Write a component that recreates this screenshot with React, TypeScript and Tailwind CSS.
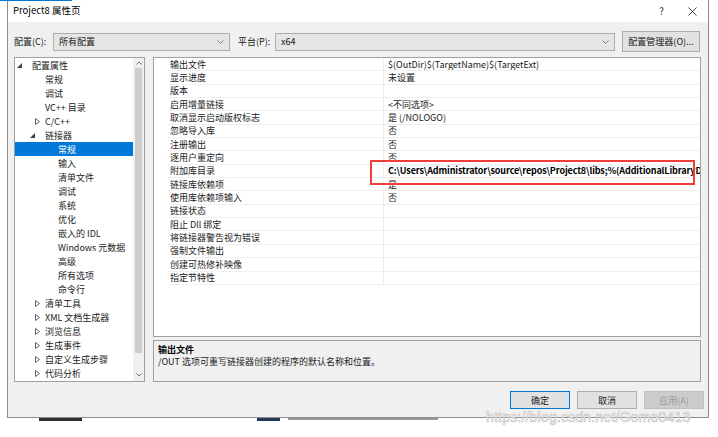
import React from 'react';

type TreeItem = { label: string; level: number; arrow?: 'open' | 'closed'; selected?: boolean };

const tree: TreeItem[] = [
  { label: '配置属性', level: 0, arrow: 'open' },
  { label: '常规', level: 1 },
  { label: '调试', level: 1 },
  { label: 'VC++ 目录', level: 1 },
  { label: 'C/C++', level: 1, arrow: 'closed' },
  { label: '链接器', level: 1, arrow: 'open' },
  { label: '常规', level: 2, selected: true },
  { label: '输入', level: 2 },
  { label: '清单文件', level: 2 },
  { label: '调试', level: 2 },
  { label: '系统', level: 2 },
  { label: '优化', level: 2 },
  { label: '嵌入的 IDL', level: 2 },
  { label: 'Windows 元数据', level: 2 },
  { label: '高级', level: 2 },
  { label: '所有选项', level: 2 },
  { label: '命令行', level: 2 },
  { label: '清单工具', level: 1, arrow: 'closed' },
  { label: 'XML 文档生成器', level: 1, arrow: 'closed' },
  { label: '浏览信息', level: 1, arrow: 'closed' },
  { label: '生成事件', level: 1, arrow: 'closed' },
  { label: '自定义生成步骤', level: 1, arrow: 'closed' },
  { label: '代码分析', level: 1, arrow: 'closed' },
];

const props: { name: string; value: string; bold?: boolean }[] = [
  { name: '输出文件', value: '$(OutDir)$(TargetName)$(TargetExt)' },
  { name: '显示进度', value: '未设置' },
  { name: '版本', value: '' },
  { name: '启用增量链接', value: '<不同选项>' },
  { name: '取消显示启动版权标志', value: '是 (/NOLOGO)' },
  { name: '忽略导入库', value: '否' },
  { name: '注册输出', value: '否' },
  { name: '逐用户重定向', value: '否' },
  { name: '附加库目录', value: 'C:\\Users\\Administrator\\source\\repos\\Project8\\libs;%(AdditionalLibraryD', bold: true },
  { name: '链接库依赖项', value: '是' },
  { name: '使用库依赖项输入', value: '否' },
  { name: '链接状态', value: '' },
  { name: '阻止 Dll 绑定', value: '' },
  { name: '将链接器警告视为错误', value: '' },
  { name: '强制文件输出', value: '' },
  { name: '创建可热修补映像', value: '' },
  { name: '指定节特性', value: '' },
];

const Chevron = () => (
  <svg width="7" height="4" viewBox="0 0 7 4" className="shrink-0">
    <polyline points="0.5,0.5 3.5,3.5 6.5,0.5" fill="none" stroke="#707070" strokeWidth="0.9" />
  </svg>
);

const Arrow = ({ kind }: { kind: 'open' | 'closed' }) =>
  kind === 'open' ? (
    <svg width="5" height="5" viewBox="0 0 5 5" className="ml-[2px]">
      <polygon points="5,0 5,5 0,5" fill="#404040" />
    </svg>
  ) : (
    <svg width="5" height="7" viewBox="0 0 5 7" className="ml-[7px]">
      <polygon points="0.5,0.5 4.5,3.5 0.5,6.5" fill="none" stroke="#505050" strokeWidth="0.9" />
    </svg>
  );

export default function App() {
  return (
    <div className="relative w-[718px] h-[437px] bg-white overflow-hidden text-[9px] leading-none text-[#1a1a1a] font-['Noto_Sans_CJK_SC','Noto_Sans',sans-serif]">
      <div className="absolute left-0 top-0 w-[72px] h-[1px] bg-[#0078d7]" />

      {/* dialog window */}
      <div className="ml-[7px] w-[702px] h-[418px] flex flex-col border-l border-r border-b border-[#8c8c8c]">
        {/* title bar */}
        <div className="h-[22px] shrink-0 bg-white flex items-center pl-[5px] pr-[11px]">
          <span className="text-[9.5px] text-black">Project8 属性页</span>
          <span className="ml-auto text-[10px] text-[#333]">?</span>
          <svg width="9" height="9" viewBox="0 0 9 9" className="ml-[24px]">
            <path d="M0.5 0.5 L8.5 8.5 M8.5 0.5 L0.5 8.5" stroke="#333" strokeWidth="0.9" />
          </svg>
        </div>

        <div className="flex-1 min-h-0 flex flex-col bg-[#f0f0f0]">
          {/* configuration row */}
          <div className="mt-[9px] h-[21px] flex items-center pl-[6px]">
            <span className="w-[39px] shrink-0">配置(C):</span>
            <div className="w-[177px] shrink-0 h-[18px] flex items-center justify-between px-[5px] bg-[#e5e5e5] border border-[#adadad]">
              <span>所有配置</span>
              <Chevron />
            </div>
            <span className="ml-[8px] w-[37px] shrink-0">平台(P):</span>
            <div className="w-[340px] shrink-0 h-[18px] flex items-center justify-between px-[5px] bg-[#e5e5e5] border border-[#adadad]">
              <span>x64</span>
              <Chevron />
            </div>
            <div className="ml-[7px] w-[78px] shrink-0 h-[21px] flex items-center justify-center bg-[#e1e1e1] border border-[#adadad]">
              配置管理器(O)...
            </div>
          </div>

          {/* main area */}
          <div className="mt-[5px] h-[325px] flex pl-[6px] pr-[7px]">
            {/* tree */}
            <div className="w-[131px] shrink-0 h-full flex bg-white border border-[#a0a0a0]">
              <div className="flex-1 min-w-0 flex flex-col">
                {tree.map((t, i) => (
                  <div
                    key={i}
                    className={`h-[14px] shrink-0 flex items-center ${t.selected ? 'bg-[#0078d7] text-white' : ''}`}
                  >
                    <div className="shrink-0" style={{ width: t.level * 13 }} />
                    <div className="w-[17px] shrink-0 flex items-center">{t.arrow && <Arrow kind={t.arrow} />}</div>
                    <span className="whitespace-nowrap">{t.label}</span>
                  </div>
                ))}
              </div>
              <div className="w-[11px] shrink-0 h-full flex flex-col bg-[#f0f0f0]">
                <div className="h-[10px] flex items-center justify-center">
                  <svg width="6" height="4" viewBox="0 0 6 4">
                    <polyline points="0.5,3.5 3,1 5.5,3.5" fill="none" stroke="#606060" strokeWidth="0.9" />
                  </svg>
                </div>
                <div className="mx-[2px] h-[285px] bg-[#cdcdcd]" />
                <div className="flex-1" />
                <div className="h-[12px] flex items-center justify-center">
                  <svg width="6" height="4" viewBox="0 0 6 4">
                    <polyline points="0.5,0.5 3,3 5.5,0.5" fill="none" stroke="#606060" strokeWidth="0.9" />
                  </svg>
                </div>
              </div>
            </div>

            {/* right column */}
            <div className="ml-[8px] flex-1 min-w-0 flex flex-col">
              <div className="relative h-[280px] bg-white border border-[#a0a0a0] overflow-hidden">
                <div className="flex flex-col">
                  {props.map((p, i) => (
                    <div key={i} className="h-[13.35px] flex">
                      <div className="w-[14px] shrink-0" />
                      <div className="w-[215px] shrink-0 flex items-center pl-[2px] border-b border-[#f0f0f0]">
                        <span className="whitespace-nowrap">{p.name}</span>
                      </div>
                      <div className="flex-1 min-w-0 flex items-center pl-[4px] border-l border-b border-[#eeeeee] overflow-hidden">
                        <span className={`whitespace-nowrap ${p.bold ? 'font-bold text-black tracking-[-0.12px]' : ''}`}>{p.value}</span>
                      </div>
                    </div>
                  ))}
                </div>
                <div className="absolute left-[216px] top-[102px] w-[325px] h-[25px] border-2 border-[#f23d3d]" />
              </div>
              <div className="mt-[3px] flex-1 flex flex-col pl-[4px] pt-[4px] border border-[#a0a0a0] bg-[#f0f0f0]">
                <span className="font-bold text-black">输出文件</span>
                <span className="mt-[3px]">/OUT 选项可重写链接器创建的程序的默认名称和位置。</span>
              </div>
            </div>
          </div>

          {/* buttons */}
          <div className="mt-[9px] h-[18px] flex justify-end pr-[4px] gap-[7px]">
            <div className="w-[60px] h-[18px] flex items-center justify-center bg-[#e1e1e1] border border-[#0078d7]">确定</div>
            <div className="w-[60px] h-[18px] flex items-center justify-center bg-[#e1e1e1] border border-[#adadad]">取消</div>
            <div className="w-[60px] h-[18px] flex items-center justify-center bg-[#cccccc] border border-[#bfbfbf] text-[#9a9a9a]">应用(A)</div>
          </div>
        </div>
      </div>

      {/* fragments of the window behind */}
      <div className="h-[4px] flex items-start">
        <div className="ml-[39px] w-[43px] h-[3px] bg-[#2d2d2d]" />
        <div className="ml-[175px] w-[23px] h-[3px] bg-[#23395b]" />
        <div className="ml-[8px] w-[150px] h-[2px] bg-[#9a9a9a]" />
      </div>

      <div className="absolute left-[486px] top-[410px] text-[14px] leading-none tracking-[0.2px] text-[#f7f7f7] font-['Liberation_Sans',sans-serif] [-webkit-text-stroke:0.6px_#c4c4c4]">
        https://blog.csdn.net/Gomo0413
      </div>
    </div>
  );
}
